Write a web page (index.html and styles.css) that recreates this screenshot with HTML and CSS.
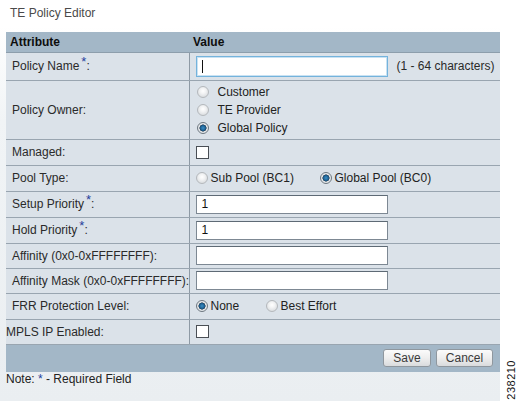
FILE: index.html
```html
<!DOCTYPE html>
<html>
<head>
<meta charset="utf-8">
<link rel="stylesheet" href="styles.css">
</head>
<body>
<div class="page">
  <div class="panel">
    <div class="title">TE Policy Editor</div>
    <table class="editor">
      <tr class="head">
        <th class="c1">Attribute</th>
        <th class="c2">Value</th>
      </tr>
      <tr class="r-name">
        <td class="lbl">Policy Name<sup class="req">*</sup>:</td>
        <td class="val">
          <div class="line">
            <div class="field focus"><span class="caret"></span></div>
            <span class="hint">(1 - 64 characters)</span>
          </div>
        </td>
      </tr>
      <tr class="r-owner">
        <td class="lbl">Policy Owner:</td>
        <td class="val">
          <div class="stack">
            <div class="opt"><span class="radio"></span><span class="otext">Customer</span></div>
            <div class="opt"><span class="radio"></span><span class="otext">TE Provider</span></div>
            <div class="opt"><span class="radio on"></span><span class="otext">Global Policy</span></div>
          </div>
        </td>
      </tr>
      <tr class="r26">
        <td class="lbl">Managed:</td>
        <td class="val"><span class="check"></span></td>
      </tr>
      <tr class="r26">
        <td class="lbl">Pool Type:</td>
        <td class="val">
          <div class="line">
            <span class="radio"></span><span class="rtext w-sub">Sub Pool (BC1)</span>
            <span class="radio on"></span><span class="rtext">Global Pool (BC0)</span>
          </div>
        </td>
      </tr>
      <tr class="r26">
        <td class="lbl">Setup Priority<sup class="req">*</sup>:</td>
        <td class="val"><div class="field">1</div></td>
      </tr>
      <tr class="r26">
        <td class="lbl">Hold Priority<sup class="req">*</sup>:</td>
        <td class="val"><div class="field">1</div></td>
      </tr>
      <tr class="r25">
        <td class="lbl">Affinity (0x0-0xFFFFFFFF):</td>
        <td class="val"><div class="field"></div></td>
      </tr>
      <tr class="r25">
        <td class="lbl">Affinity Mask (0x0-0xFFFFFFFF):</td>
        <td class="val"><div class="field"></div></td>
      </tr>
      <tr class="r26">
        <td class="lbl">FRR Protection Level:</td>
        <td class="val">
          <div class="line">
            <span class="radio on"></span><span class="rtext w-none">None</span>
            <span class="radio"></span><span class="rtext">Best Effort</span>
          </div>
        </td>
      </tr>
      <tr class="r25">
        <td class="lbl flush">MPLS IP Enabled:</td>
        <td class="val"><span class="check"></span></td>
      </tr>
      <tr class="foot">
        <td colspan="2">
          <div class="buttons">
            <span class="btn save">Save</span>
            <span class="btn cancel">Cancel</span>
          </div>
        </td>
      </tr>
    </table>
    <div class="note">Note: <span class="req-inline">*</span> - Required Field</div>
  </div>
  <div class="figno">238210</div>
</div>
</body>
</html>
```

FILE: styles.css
```css
html, body {
  margin: 0;
  padding: 0;
  background: #ffffff;
}
body {
  font-family: "Liberation Sans", Arial, sans-serif;
  font-size: 12px;
  color: #222;
}
.page {
  position: relative;
  width: 520px;
  height: 401px;
}
.panel {
  width: 500px;
  height: 401px;
  box-sizing: border-box;
  padding-left: 6px;
  background: linear-gradient(to bottom, #ffffff 0px, #ffffff 26px, #f1f4f6 120px, #eaeef1 401px);
}
.title {
  height: 32px;
  line-height: 26px;
  padding-left: 4px;
  color: #4a4a4a;
  font-size: 12px;
}
.editor {
  width: 494px;
  border-collapse: collapse;
  table-layout: fixed;
}
.editor th {
  background: #a3b7c7;
  height: 20px;
  padding: 0;
  text-align: left;
  font-weight: bold;
  font-size: 12px;
  color: #0d0d0d;
  border-bottom: 1px solid #8d9eac;
  box-sizing: border-box;
}
.editor th.c1 { width: 183px; padding-left: 4px; }
.editor th.c2 { padding-left: 4px; }
.editor td {
  padding: 0;
  background: #dbe2e9;
  border-bottom: 1px solid #99a5b0;
  vertical-align: middle;
}
.editor td.lbl {
  padding-left: 6px;
  border-right: 1px solid #8e9aa5;
  color: #2a2a2a;
  white-space: nowrap;
}
.editor td.lbl.flush { padding-left: 0; }
.editor td.val { padding-left: 6px; }
.r-name td { height: 27px; }
.r-owner td { height: 58px; }
.r26 td { height: 25px; }
.r25 td { height: 24px; }
.editor tr.foot td {
  height: 27px;
  background: #a3b7c7;
  border-bottom: none;
}
.req {
  color: #1f3f9c;
  font-size: 13px;
  vertical-align: 4px;
  line-height: 0;
  margin-left: 2px;
}
.line {
  display: flex;
  align-items: center;
}
.field {
  width: 192px;
  height: 19px;
  box-sizing: border-box;
  background: #fff;
  border: 1px solid #7d8893;
  border-top-color: #5e6a75;
  padding-left: 5px;
  line-height: 17px;
  font-size: 12px;
  color: #111;
}
.field.focus {
  height: 21px;
  border: 1px solid #74b3dc;
  box-shadow: inset 0 0 0 1px #c9e2f3;
  display: flex;
  align-items: center;
}
.caret {
  display: inline-block;
  width: 1px;
  height: 13px;
  background: #111;
}
.hint {
  margin-left: 9px;
  color: #2a2a2a;
}
.stack {
  display: flex;
  flex-direction: column;
  gap: 5px;
  padding-left: 1px;
  padding-top: 1px;
}
.opt {
  display: flex;
  align-items: center;
  height: 13px;
}
.otext { margin-left: 9px; }
.radio {
  display: inline-block;
  width: 12px;
  height: 12px;
  box-sizing: border-box;
  border-radius: 50%;
  border: 1px solid #b4b8bc;
  background: radial-gradient(circle at 50% 40%, #ffffff 0, #f2f3f4 35%, #cfd3d6 100%);
  flex: none;
}
.radio.on {
  border-color: #6d7780;
  background: radial-gradient(circle at 50% 50%, #3d8fc4 0, #1a5f92 2.5px, #2b3f52 3.3px, #dfe3e6 3.8px, #f6f7f8 100%);
}
.rtext { margin-left: 3px; }
.w-sub { width: 109px; }
.w-none { width: 55px; }
.check {
  display: block;
  width: 13px;
  height: 13px;
  box-sizing: border-box;
  border: 1px solid #4a4f55;
  background: #fff;
}
.buttons {
  display: flex;
  justify-content: flex-end;
  gap: 5px;
  padding-right: 7px;
}
.btn {
  display: inline-flex;
  align-items: center;
  justify-content: center;
  height: 18px;
  box-sizing: border-box;
  border: 1px solid #8f979e;
  border-radius: 3px;
  background: linear-gradient(to bottom, #fbfbfb 0%, #eeeeee 50%, #d9dbdd 100%);
  color: #3a3a3a;
  font-size: 12px;
}
.btn.save { width: 48px; }
.btn.cancel { width: 57px; }
.note {
  padding-top: 0;
  color: #222;
  line-height: 14px;
}
.req-inline { color: #1f3f9c; }
.figno {
  position: absolute;
  left: 505px;
  top: 360px;
  writing-mode: vertical-rl;
  transform: rotate(180deg);
  font-size: 11px;
  color: #111;
  letter-spacing: 0.5px;
}
```
